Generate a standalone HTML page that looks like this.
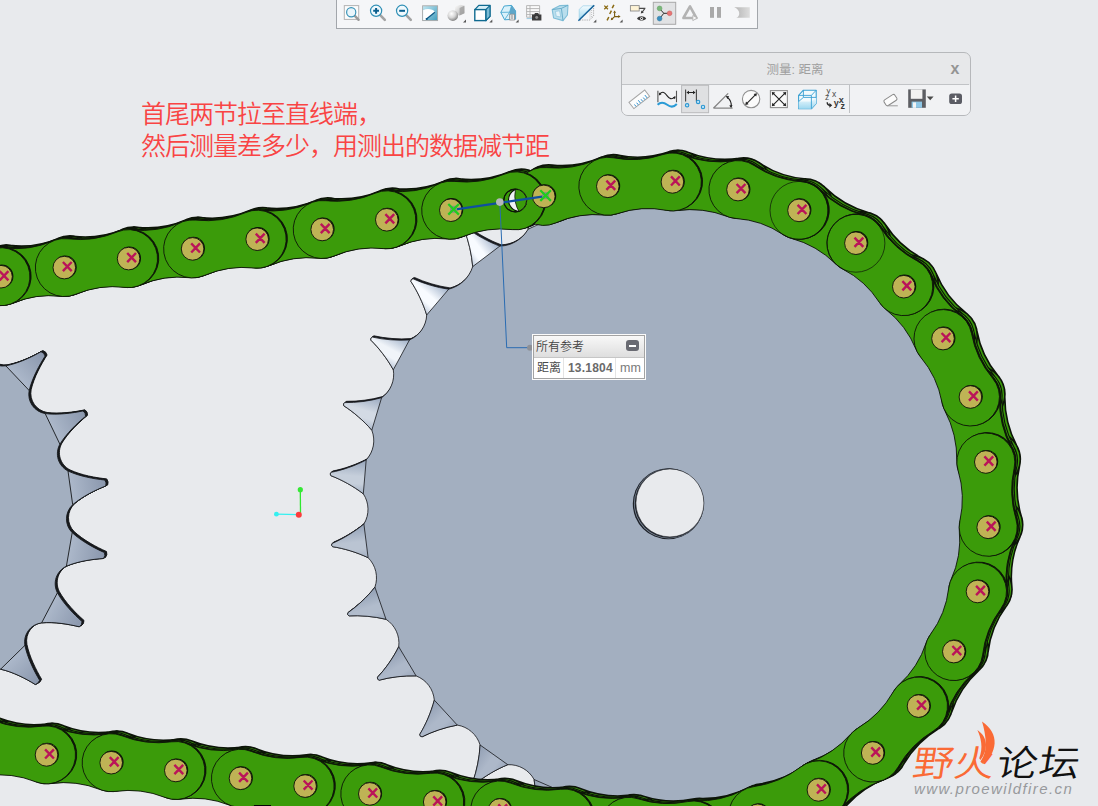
<!DOCTYPE html>
<html><head><meta charset="utf-8"><title>chain</title>
<style>
html,body{margin:0;padding:0}
body{width:1098px;height:806px;position:relative;overflow:hidden;background:#e8eaed;font-family:"Liberation Sans","Noto Sans CJK SC",sans-serif}
.cjk{font-family:"Liberation Sans","Noto Sans CJK SC",sans-serif}
#note{position:absolute;left:141px;top:97.5px;color:#f94444;font-size:25px;line-height:32.5px;white-space:nowrap;font-weight:350;letter-spacing:-1px}
#tb{position:absolute;left:336px;top:-2px;width:420px;height:29px;background:#f5f6f8;border:1px solid #a2a6ab;box-sizing:content-box}
#mp{position:absolute;left:621px;top:52px;width:348px;height:62px;border:1px solid #b6b8bb;border-radius:7px;background:#e7e8ea;box-sizing:content-box;overflow:hidden}
#mp .t{position:absolute;left:-1px;top:0;width:100%;height:31px;line-height:35px;text-align:center;color:#9e9e9e;font-size:12.5px;border-bottom:1px solid #c1c3c6}
#mp .r{position:absolute;left:0;top:32px;width:100%;height:30px;background:#f1f2f4}
#mp .x{position:absolute;left:328.5px;top:6.5px;font:bold 16px "Liberation Sans",sans-serif;color:#949494;line-height:18px}
#pop{position:absolute;left:532px;top:334px;width:112px;height:44px;border:1px solid #fbfbfb;background:#fff;box-sizing:content-box}
#pop .in{position:absolute;left:0;top:0;right:0;bottom:0;border:1px solid #a3a3a3}
#pop .h{position:absolute;left:0;top:0;width:100%;height:22px;background:linear-gradient(#f8f8f8,#dedede);border-bottom:1px solid #c6c6c6;box-sizing:border-box;font-size:12px;line-height:22px;color:#444;padding-left:2px;font-weight:350}
#pop .mb{position:absolute;left:92px;top:4px;width:13px;height:11px;border-radius:3px;background:#696a72}
#pop .mb i{position:absolute;left:3px;top:4.5px;width:7px;height:2px;background:#fff}
#pop .row{position:absolute;left:0;top:22px;width:100%;height:20px;font-size:12px;line-height:20px;color:#555}
#pop .row span{position:absolute;top:0}
#wm{position:absolute;left:0;top:0;font-size:36px;line-height:40px;white-space:nowrap;font-weight:350}
#wm span{position:absolute;top:744px;display:block;transform-origin:0 100%;transform:skewX(-9deg) scaleX(1.13)}
#wm2{position:absolute;left:914px;top:780px;font:italic 15px/18px "Liberation Sans",sans-serif;color:#97999c;letter-spacing:1.4px;white-space:nowrap}

</style></head><body>
<svg width="1098" height="806" viewBox="0 0 1098 806" style="position:absolute;left:0;top:0"><defs><path id="so" d="M-46.2 332.4C-35.2 326.5 -24.4 316.3 -17 308.2Q-13.6 308.2 -11.8 311.1C-14.6 321.7 -17.4 336.3 -16.4 348.7C-15.2 359.8 -5.2 367.5 5.8 365.8C18.1 363.5 31.5 357.2 41 351.7Q44.3 352.7 45.1 356.1C39.2 365.3 32.1 378.3 29.2 390.5C27 401.4 34.2 411.7 45.2 413.6C57.6 415.1 72.2 413.2 83 410.9Q85.8 412.8 85.6 416.3C77.1 423.2 66.4 433.5 59.9 444.2C54.5 453.9 58.1 465.9 68 471C79.4 476.3 93.9 478.9 104.8 480Q106.9 482.8 105.7 486C95.5 490 82.2 496.5 72.7 504.7C64.6 512.3 64.4 524.9 72.2 532.7C81.4 541.2 94.5 548.2 104.5 552.6Q105.7 555.8 103.5 558.5C92.6 559.2 77.9 561.3 66.4 566.2C56.3 571 52.3 582.9 57.4 592.8C63.5 603.7 73.8 614.3 82 621.5Q82.2 625 79.3 626.8C68.6 624.2 54 621.7 41.6 622.9C30.5 624.3 23 634.4 24.9 645.4C27.4 657.6 34 670.9 39.6 680.3Q38.6 683.6 35.3 684.5C26 678.7 12.8 671.9 0.6 669.2C-10.3 667.2 -20.5 674.5 -22.2 685.6C-23.5 698 -21.3 712.6 -18.8 723.3Q-20.7 726.2 -24.2 726C-31.3 717.7 -41.7 707.1 -52.5 700.8A199.9 199.9 0 1 1 -46.2 332.4 Z"/><linearGradient id="s0" gradientUnits="userSpaceOnUse" x1="-31.3" y1="340.6" x2="-14.2" y2="309.3"><stop offset="0" stop-color="#acb8ca"/><stop offset="1" stop-color="#8a97ad"/></linearGradient><linearGradient id="s1" gradientUnits="userSpaceOnUse" x1="17.5" y1="378.1" x2="43.4" y2="353.6"><stop offset="0" stop-color="#acb8ca"/><stop offset="1" stop-color="#8a97ad"/></linearGradient><linearGradient id="s2" gradientUnits="userSpaceOnUse" x1="52.5" y1="428.9" x2="84.6" y2="413.4"><stop offset="0" stop-color="#acb8ca"/><stop offset="1" stop-color="#8a97ad"/></linearGradient><linearGradient id="s3" gradientUnits="userSpaceOnUse" x1="70.4" y1="487.9" x2="105.7" y2="482.9"><stop offset="0" stop-color="#acb8ca"/><stop offset="1" stop-color="#8a97ad"/></linearGradient><linearGradient id="s4" gradientUnits="userSpaceOnUse" x1="69.3" y1="549.5" x2="104.4" y2="555.6"><stop offset="0" stop-color="#acb8ca"/><stop offset="1" stop-color="#8a97ad"/></linearGradient><linearGradient id="s5" gradientUnits="userSpaceOnUse" x1="49.5" y1="607.8" x2="81" y2="624.4"><stop offset="0" stop-color="#acb8ca"/><stop offset="1" stop-color="#8a97ad"/></linearGradient><linearGradient id="s6" gradientUnits="userSpaceOnUse" x1="12.8" y1="657.3" x2="37.7" y2="682.7"><stop offset="0" stop-color="#acb8ca"/><stop offset="1" stop-color="#8a97ad"/></linearGradient><linearGradient id="s7" gradientUnits="userSpaceOnUse" x1="-37.3" y1="693.2" x2="-21.3" y2="725"><stop offset="0" stop-color="#acb8ca"/><stop offset="1" stop-color="#8a97ad"/></linearGradient><path id="bo" d="M623.4 197.3C614.7 188.6 606.4 177.2 601.2 167.4Q599.2 166.1 597.9 168.2C597.3 179.2 594.5 193 590.2 204.5C582.3 213.2 570.5 217.2 558.9 215C548.6 208.4 538 199 530.9 190.6Q528.6 189.8 527.8 192C529.6 202.9 529.8 217 528.1 229.2C522.2 239.4 511.6 245.8 499.8 246.1C488.3 241.9 476 235 467.2 228.3Q464.8 228 464.5 230.4C468.5 240.6 471.8 254.4 472.7 266.6C469.2 277.8 460.2 286.3 448.7 289.2C436.6 287.6 423.1 283.5 413.1 278.8Q410.7 279 410.9 281.4C417 290.5 423.2 303.3 426.7 315C426.2 325.9 419.6 335.6 409.5 339.9C397.3 340.8 383.2 339.6 372.5 337.1Q370.2 337.8 370.8 340.1C378.8 347.8 387.4 359 393.3 369.8C395.1 380.5 390.5 391.4 381.6 397.7C369.8 401.1 355.8 402.8 344.8 402.6Q342.7 403.7 343.8 405.8C353.1 411.7 363.9 420.9 371.8 430.2C375.8 440.4 373.6 451.9 366.2 459.9C355.4 465.7 342 470.3 331.2 472.3Q329.3 473.9 330.9 475.7C341.2 479.5 353.6 486.3 363.3 493.8C369.3 502.9 369.6 514.6 363.9 524C354.5 531.9 342.4 539.1 332.2 543.4Q330.7 545.2 332.6 546.7C343.5 548.3 357.1 552.4 368.1 557.7C375.9 565.4 378.5 576.9 374.9 587.2C367.4 596.8 357 606.4 347.9 612.7Q346.8 614.8 349 615.9C360 615.2 374.1 616.4 386 619.3C395.2 625.3 400.1 635.9 398.7 646.7C393.3 657.8 385.1 669.3 377.5 677.2Q376.9 679.6 379.2 680.2C389.9 677.2 403.9 675.5 416.1 675.9C426.4 679.8 433.4 689.2 434.3 700.1C431.2 712 425.6 725 419.8 734.3Q419.7 736.8 422.1 736.8C431.9 731.8 445.2 727.2 457.3 725.1C468.1 726.8 476.9 734.5 480.1 745C479.5 757.3 476.7 771.1 472.9 781.5Q473.3 783.9 475.7 783.5C484.3 776.5 496.4 769.2 507.8 764.7C518.7 764.2 528.9 769.9 534.1 779.5C536.1 791.6 536.2 805.8 534.7 816.7Q535.5 818.9 537.8 818C544.7 809.5 555.1 799.9 565.3 793.1C575.9 790.3 587 793.8 594.1 802.2C598.6 813.6 601.6 827.4 602.3 838.4Q603.6 840.4 605.6 839.1C610.7 829.3 618.8 817.7 627.4 809C637.2 804.1 648.9 805.2 657.5 811.9C664.2 822.2 670 835.1 673 845.7Q674.7 847.4 676.4 845.7C679.3 835 684.9 822.1 691.5 811.7A309.5 309.5 0 1 0 623.4 197.3 Z"/><linearGradient id="b0" gradientUnits="userSpaceOnUse" x1="623.4" y1="197.3" x2="590.2" y2="204.5"><stop offset="0" stop-color="#9fb0c8"/><stop offset=".5" stop-color="#f8fbff"/><stop offset=".72" stop-color="#f8fbff"/><stop offset="1" stop-color="#becadb"/></linearGradient><linearGradient id="b1" gradientUnits="userSpaceOnUse" x1="558.9" y1="215" x2="528.1" y2="229.2"><stop offset="0" stop-color="#9fb0c8"/><stop offset=".5" stop-color="#f8fbff"/><stop offset=".72" stop-color="#f8fbff"/><stop offset="1" stop-color="#becadb"/></linearGradient><linearGradient id="b2" gradientUnits="userSpaceOnUse" x1="499.8" y1="246.1" x2="472.7" y2="266.6"><stop offset="0" stop-color="#9fb0c8"/><stop offset=".5" stop-color="#f8fbff"/><stop offset=".72" stop-color="#f8fbff"/><stop offset="1" stop-color="#becadb"/></linearGradient><linearGradient id="b3" gradientUnits="userSpaceOnUse" x1="448.7" y1="289.2" x2="426.7" y2="315"><stop offset="0" stop-color="#9fb0c8"/><stop offset=".5" stop-color="#f8fbff"/><stop offset=".72" stop-color="#f8fbff"/><stop offset="1" stop-color="#becadb"/></linearGradient><linearGradient id="b4" gradientUnits="userSpaceOnUse" x1="409.5" y1="339.9" x2="393.3" y2="369.8"><stop offset="0" stop-color="#9daec6"/><stop offset=".5" stop-color="#f0f4f9"/><stop offset=".72" stop-color="#f0f4f9"/><stop offset="1" stop-color="#bac6d8"/></linearGradient><linearGradient id="b5" gradientUnits="userSpaceOnUse" x1="381.6" y1="397.7" x2="371.8" y2="430.2"><stop offset="0" stop-color="#98a7be"/><stop offset=".5" stop-color="#d3dae4"/><stop offset=".72" stop-color="#d3dae4"/><stop offset="1" stop-color="#adb9cb"/></linearGradient><linearGradient id="b6" gradientUnits="userSpaceOnUse" x1="366.2" y1="459.9" x2="363.3" y2="493.8"><stop offset="0" stop-color="#95a4ba"/><stop offset=".5" stop-color="#c6cfdb"/><stop offset=".72" stop-color="#c6cfdb"/><stop offset="1" stop-color="#a6b3c6"/></linearGradient><linearGradient id="b7" gradientUnits="userSpaceOnUse" x1="363.9" y1="524" x2="368.1" y2="557.7"><stop offset="0" stop-color="#93a1b7"/><stop offset=".5" stop-color="#bac4d2"/><stop offset=".72" stop-color="#bac4d2"/><stop offset="1" stop-color="#a1adc0"/></linearGradient><linearGradient id="b8" gradientUnits="userSpaceOnUse" x1="374.9" y1="587.2" x2="386" y2="619.3"><stop offset="0" stop-color="#919fb4"/><stop offset=".5" stop-color="#b1bccc"/><stop offset=".72" stop-color="#b1bccc"/><stop offset="1" stop-color="#9ca9bc"/></linearGradient><linearGradient id="b9" gradientUnits="userSpaceOnUse" x1="398.7" y1="646.7" x2="416.1" y2="675.9"><stop offset="0" stop-color="#919eb3"/><stop offset=".5" stop-color="#adb8c9"/><stop offset=".72" stop-color="#adb8c9"/><stop offset="1" stop-color="#9ba7bb"/></linearGradient><linearGradient id="b10" gradientUnits="userSpaceOnUse" x1="434.3" y1="700.1" x2="457.3" y2="725.1"><stop offset="0" stop-color="#919eb3"/><stop offset=".5" stop-color="#adb8c9"/><stop offset=".72" stop-color="#adb8c9"/><stop offset="1" stop-color="#9ba7bb"/></linearGradient><linearGradient id="b11" gradientUnits="userSpaceOnUse" x1="480.1" y1="745" x2="507.8" y2="764.7"><stop offset="0" stop-color="#919eb3"/><stop offset=".5" stop-color="#adb8c9"/><stop offset=".72" stop-color="#adb8c9"/><stop offset="1" stop-color="#9ba7bb"/></linearGradient><linearGradient id="b12" gradientUnits="userSpaceOnUse" x1="534.1" y1="779.5" x2="565.3" y2="793.1"><stop offset="0" stop-color="#919eb3"/><stop offset=".5" stop-color="#adb8c9"/><stop offset=".72" stop-color="#adb8c9"/><stop offset="1" stop-color="#9ba7bb"/></linearGradient><linearGradient id="b13" gradientUnits="userSpaceOnUse" x1="594.1" y1="802.2" x2="627.4" y2="809"><stop offset="0" stop-color="#919eb3"/><stop offset=".5" stop-color="#adb8c9"/><stop offset=".72" stop-color="#adb8c9"/><stop offset="1" stop-color="#9ba7bb"/></linearGradient><linearGradient id="b14" gradientUnits="userSpaceOnUse" x1="657.5" y1="811.9" x2="691.5" y2="811.7"><stop offset="0" stop-color="#919eb3"/><stop offset=".5" stop-color="#adb8c9"/><stop offset=".72" stop-color="#adb8c9"/><stop offset="1" stop-color="#9ba7bb"/></linearGradient></defs><use href="#so" transform="translate(2,-1.1)" fill="#23272e" stroke="#15171a" stroke-width="0.9"/>
<use href="#so" transform="translate(1.3,-0.7)" fill="#23272e" stroke="#15171a" stroke-width="0.9"/>
<use href="#so" transform="translate(0.7,-0.4)" fill="#23272e" stroke="#15171a" stroke-width="0.9"/>
<use href="#so" fill="#a3afc0" stroke="#15171a" stroke-width="0.9" stroke-linejoin="round"/>
<path d="M-46.2 332.4C-35.2 326.5 -24.4 316.3 -17 308.2Q-13.6 308.2 -11.8 311.1C-14.6 321.7 -17.4 336.3 -16.4 348.7Z" fill="url(#s0)" stroke="#15171a" stroke-width="0.9" stroke-linejoin="round"/>
<path d="M5.8 365.8C18.1 363.5 31.5 357.2 41 351.7Q44.3 352.7 45.1 356.1C39.2 365.3 32.1 378.3 29.2 390.5Z" fill="url(#s1)" stroke="#15171a" stroke-width="0.9" stroke-linejoin="round"/>
<path d="M45.2 413.6C57.6 415.1 72.2 413.2 83 410.9Q85.8 412.8 85.6 416.3C77.1 423.2 66.4 433.5 59.9 444.2Z" fill="url(#s2)" stroke="#15171a" stroke-width="0.9" stroke-linejoin="round"/>
<path d="M68 471C79.4 476.3 93.9 478.9 104.8 480Q106.9 482.8 105.7 486C95.5 490 82.2 496.5 72.7 504.7Z" fill="url(#s3)" stroke="#15171a" stroke-width="0.9" stroke-linejoin="round"/>
<path d="M72.2 532.7C81.4 541.2 94.5 548.2 104.5 552.6Q105.7 555.8 103.5 558.5C92.6 559.2 77.9 561.3 66.4 566.2Z" fill="url(#s4)" stroke="#15171a" stroke-width="0.9" stroke-linejoin="round"/>
<path d="M57.4 592.8C63.5 603.7 73.8 614.3 82 621.5Q82.2 625 79.3 626.8C68.6 624.2 54 621.7 41.6 622.9Z" fill="url(#s5)" stroke="#15171a" stroke-width="0.9" stroke-linejoin="round"/>
<path d="M24.9 645.4C27.4 657.6 34 670.9 39.6 680.3Q38.6 683.6 35.3 684.5C26 678.7 12.8 671.9 0.6 669.2Z" fill="url(#s6)" stroke="#15171a" stroke-width="0.9" stroke-linejoin="round"/>
<path d="M-22.2 685.6C-23.5 698 -21.3 712.6 -18.8 723.3Q-20.7 726.2 -24.2 726C-31.3 717.7 -41.7 707.1 -52.5 700.8Z" fill="url(#s7)" stroke="#15171a" stroke-width="0.9" stroke-linejoin="round"/>
<use href="#bo" transform="translate(1.5,-1.3)" fill="#23272e" stroke="#15171a" stroke-width="0.8"/>
<use href="#bo" transform="translate(0.8,-0.7)" fill="#23272e" stroke="#15171a" stroke-width="0.8"/>
<use href="#bo" fill="#a3afc0" stroke="#15171a" stroke-width="0.8" stroke-linejoin="round"/>
<path d="M623.4 197.3C614.7 188.6 606.4 177.2 601.2 167.4Q599.2 166.1 597.9 168.2C597.3 179.2 594.5 193 590.2 204.5Z" fill="url(#b0)" stroke="#15171a" stroke-width="0.8" stroke-linejoin="round"/>
<path d="M558.9 215C548.6 208.4 538 199 530.9 190.6Q528.6 189.8 527.8 192C529.6 202.9 529.8 217 528.1 229.2Z" fill="url(#b1)" stroke="#15171a" stroke-width="0.8" stroke-linejoin="round"/>
<path d="M499.8 246.1C488.3 241.9 476 235 467.2 228.3Q464.8 228 464.5 230.4C468.5 240.6 471.8 254.4 472.7 266.6Z" fill="url(#b2)" stroke="#15171a" stroke-width="0.8" stroke-linejoin="round"/>
<path d="M448.7 289.2C436.6 287.6 423.1 283.5 413.1 278.8Q410.7 279 410.9 281.4C417 290.5 423.2 303.3 426.7 315Z" fill="url(#b3)" stroke="#15171a" stroke-width="0.8" stroke-linejoin="round"/>
<path d="M409.5 339.9C397.3 340.8 383.2 339.6 372.5 337.1Q370.2 337.8 370.8 340.1C378.8 347.8 387.4 359 393.3 369.8Z" fill="url(#b4)" stroke="#15171a" stroke-width="0.8" stroke-linejoin="round"/>
<path d="M381.6 397.7C369.8 401.1 355.8 402.8 344.8 402.6Q342.7 403.7 343.8 405.8C353.1 411.7 363.9 420.9 371.8 430.2Z" fill="url(#b5)" stroke="#15171a" stroke-width="0.8" stroke-linejoin="round"/>
<path d="M366.2 459.9C355.4 465.7 342 470.3 331.2 472.3Q329.3 473.9 330.9 475.7C341.2 479.5 353.6 486.3 363.3 493.8Z" fill="url(#b6)" stroke="#15171a" stroke-width="0.8" stroke-linejoin="round"/>
<path d="M363.9 524C354.5 531.9 342.4 539.1 332.2 543.4Q330.7 545.2 332.6 546.7C343.5 548.3 357.1 552.4 368.1 557.7Z" fill="url(#b7)" stroke="#15171a" stroke-width="0.8" stroke-linejoin="round"/>
<path d="M374.9 587.2C367.4 596.8 357 606.4 347.9 612.7Q346.8 614.8 349 615.9C360 615.2 374.1 616.4 386 619.3Z" fill="url(#b8)" stroke="#15171a" stroke-width="0.8" stroke-linejoin="round"/>
<path d="M398.7 646.7C393.3 657.8 385.1 669.3 377.5 677.2Q376.9 679.6 379.2 680.2C389.9 677.2 403.9 675.5 416.1 675.9Z" fill="url(#b9)" stroke="#15171a" stroke-width="0.8" stroke-linejoin="round"/>
<path d="M434.3 700.1C431.2 712 425.6 725 419.8 734.3Q419.7 736.8 422.1 736.8C431.9 731.8 445.2 727.2 457.3 725.1Z" fill="url(#b10)" stroke="#15171a" stroke-width="0.8" stroke-linejoin="round"/>
<path d="M480.1 745C479.5 757.3 476.7 771.1 472.9 781.5Q473.3 783.9 475.7 783.5C484.3 776.5 496.4 769.2 507.8 764.7Z" fill="url(#b11)" stroke="#15171a" stroke-width="0.8" stroke-linejoin="round"/>
<path d="M534.1 779.5C536.1 791.6 536.2 805.8 534.7 816.7Q535.5 818.9 537.8 818C544.7 809.5 555.1 799.9 565.3 793.1Z" fill="url(#b12)" stroke="#15171a" stroke-width="0.8" stroke-linejoin="round"/>
<path d="M594.1 802.2C598.6 813.6 601.6 827.4 602.3 838.4Q603.6 840.4 605.6 839.1C610.7 829.3 618.8 817.7 627.4 809Z" fill="url(#b13)" stroke="#15171a" stroke-width="0.8" stroke-linejoin="round"/>
<path d="M657.5 811.9C664.2 822.2 670 835.1 673 845.7Q674.7 847.4 676.4 845.7C679.3 835 684.9 822.1 691.5 811.7Z" fill="url(#b14)" stroke="#15171a" stroke-width="0.8" stroke-linejoin="round"/>
<circle cx="668.3" cy="503.8" r="35.5" fill="#1d2128"/>
<circle cx="668.9" cy="503.5" r="34.9" fill="#7d8999"/>
<circle cx="669.4" cy="503.2" r="34.6" fill="#1d2128"/>
<circle cx="669.9" cy="502.9" r="34" fill="#e8eaed" stroke="#23272e" stroke-width="0.6"/>
<g transform="translate(5.4,-2.5)"><path d="M12.4 303.4Q35.7 293.3 60.9 296.4A29 29 0 1 0 52.9 240.9Q29.6 251 4.4 247.9A29 29 0 1 0 12.4 303.4ZM140.2 285.2Q163.8 274.9 189.4 277.7A29 29 0 1 0 181 222.3Q157.4 232.6 131.8 229.8A29 29 0 1 0 140.2 285.2ZM268.8 265.8Q292.9 255.5 318.9 258.3A29 29 0 1 0 310.6 202.9Q286.5 213.2 260.5 210.4A29 29 0 1 0 268.8 265.8ZM398.4 246.4Q422 236.2 447.5 239A29 29 0 1 0 439.2 183.6Q415.6 193.8 390.1 191A29 29 0 1 0 398.4 246.4ZM555.6 222.9Q579.1 212.5 604.8 215.1A29 29 0 1 0 596 159.8Q572.5 170.2 546.8 167.6A29 29 0 1 0 555.6 222.9ZM676.6 210.6Q702.7 207 727.3 216.5A29 29 0 1 0 733.8 160.9Q707.7 164.5 683.1 155A29 29 0 1 0 676.6 210.6ZM791.5 238.4Q816.8 245.3 835.4 263.7A29 29 0 1 0 863.4 215.2Q838.1 208.3 819.5 189.9A29 29 0 1 0 791.5 238.4ZM886 309.6Q906.3 325.5 916.1 349.5A29 29 0 1 0 960.8 315.7Q940.5 299.8 930.7 275.8A29 29 0 1 0 886 309.6ZM944.9 410.8Q957.3 434.4 956.8 461.2A29 29 0 1 0 1011.3 448.2Q998.9 424.6 999.4 397.8A29 29 0 1 0 944.9 410.8ZM959.3 530.1Q961.8 555.9 951.1 579.5A29 29 0 1 0 1006.4 588.7Q1003.9 562.9 1014.6 539.3A29 29 0 1 0 959.3 530.1ZM926.2 642.7Q918.2 667.2 899.1 684.6A29 29 0 1 0 946.1 715Q954.1 690.5 973.2 673.1A29 29 0 1 0 926.2 642.7ZM850.7 734.1Q833.5 753.8 808.9 762.5A29 29 0 1 0 840.4 808.8Q857.6 789.1 882.2 780.4A29 29 0 1 0 850.7 734.1ZM744.1 789.7Q720.8 801.8 694.6 801A29 29 0 1 0 707.1 855.6Q730.4 843.5 756.6 844.3A29 29 0 1 0 744.1 789.7ZM-78.7 768Q-53 764.4 -29 774A29 29 0 1 0 -22.2 718.4Q-47.9 722 -72 712.4A29 29 0 1 0 -78.7 768ZM50.6 783.6Q76.3 780 100.3 789.6A29 29 0 1 0 107.1 734Q81.4 737.6 57.3 728A29 29 0 1 0 50.6 783.6ZM179.9 799.2Q205.6 795.6 229.6 805.2A29 29 0 1 0 236.4 749.6Q210.7 753.2 186.6 743.6A29 29 0 1 0 179.9 799.2ZM309.2 814.8Q334.9 811.2 358.9 820.8A29 29 0 1 0 365.7 765.2Q340 768.8 315.9 759.2A29 29 0 1 0 309.2 814.8ZM438.7 830.7Q464.6 827.2 488.8 836.9A29 29 0 1 0 495.7 781.3Q469.8 784.8 445.6 775.1A29 29 0 1 0 438.7 830.7ZM568.4 846.7Q594 843.4 618 853.1A29 29 0 1 0 625.1 797.6Q599.5 800.9 575.5 791.2A29 29 0 1 0 568.4 846.7ZM-52.1 312.7Q-28.2 302.5 -2.4 305.5A29 29 0 1 0 -10.4 250Q-34.3 260.2 -60.1 257.2A29 29 0 1 0 -52.1 312.7ZM75.6 294.3Q99.4 284.3 125 287.4A29 29 0 1 0 117.3 231.9Q93.5 241.9 67.9 238.8A29 29 0 1 0 75.6 294.3ZM204.2 275.5Q228.1 265.2 253.9 268A29 29 0 1 0 245.6 212.6Q221.7 222.9 195.9 220.1A29 29 0 1 0 204.2 275.5ZM333.8 256.1Q357.7 245.8 383.5 248.6A29 29 0 1 0 375.2 193.2Q351.3 203.5 325.5 200.7A29 29 0 1 0 333.8 256.1ZM462.2 236.8Q486.3 226.7 512.2 229.6A29 29 0 1 0 504.2 174.2Q480.1 184.3 454.2 181.4A29 29 0 1 0 462.2 236.8ZM617.2 213.7Q641.6 205.4 666.8 210.4A29 29 0 1 0 663 154.5Q638.6 162.8 613.4 157.8A29 29 0 1 0 617.2 213.7ZM736.1 218.5Q761.6 220.2 782.9 234.5A29 29 0 1 0 800.9 181.5Q775.4 179.8 754.1 165.5A29 29 0 1 0 736.1 218.5ZM842.6 269Q865.5 280.8 879.4 302.4A29 29 0 1 0 917.1 260.9Q894.2 249.1 880.3 227.5A29 29 0 1 0 842.6 269ZM920.8 357.3Q937.3 376.9 941.9 402.1A29 29 0 1 0 992.6 378.3Q976.1 358.7 971.5 333.5A29 29 0 1 0 920.8 357.3ZM958.1 470.5Q965.6 495.4 959.9 520.8A29 29 0 1 0 1015.9 518.8Q1008.4 493.9 1014.1 468.5A29 29 0 1 0 958.1 470.5ZM948.7 588.2Q945.8 613.7 930.5 634.3A29 29 0 1 0 982.6 654.9Q985.5 629.4 1000.8 608.8A29 29 0 1 0 948.7 588.2ZM893.2 691.9Q880.3 714.6 857.9 728.1A29 29 0 1 0 898 767.2Q910.9 744.5 933.3 731A29 29 0 1 0 893.2 691.9ZM800.7 767Q779.8 782.9 753.8 786.6A29 29 0 1 0 775.4 838.2Q796.3 822.3 822.3 818.6A29 29 0 1 0 800.7 767ZM-14.1 775.8Q11.6 772.2 35.7 781.8A29 29 0 1 0 42.4 726.2Q16.7 729.8 -7.3 720.2A29 29 0 1 0 -14.1 775.8ZM115.2 791.4Q140.9 787.8 165 797.4A29 29 0 1 0 171.7 741.8Q146 745.4 122 735.8A29 29 0 1 0 115.2 791.4ZM244.5 807Q270.2 803.4 294.3 813A29 29 0 1 0 301 757.4Q275.3 761 251.3 751.4A29 29 0 1 0 244.5 807ZM373.7 822.6Q399.6 819.2 423.8 828.9A29 29 0 1 0 430.7 773.3Q404.9 776.7 380.7 767A29 29 0 1 0 373.7 822.6ZM503.7 838.7Q529.5 835.2 553.6 844.9A29 29 0 1 0 560.5 789.3Q534.7 792.8 510.6 783.1A29 29 0 1 0 503.7 838.7ZM634.9 854.7Q660 849.5 684.4 857.5A29 29 0 1 0 687.6 801.6Q662.5 806.8 638.1 798.8A29 29 0 1 0 634.9 854.7Z" fill="#3b9b0a" stroke="#0c1408" stroke-width="1.6"/></g>
<g transform="translate(2.6,-1.3)"><path d="M12.4 303.4Q35.7 293.3 60.9 296.4A29 29 0 1 0 52.9 240.9Q29.6 251 4.4 247.9A29 29 0 1 0 12.4 303.4ZM140.2 285.2Q163.8 274.9 189.4 277.7A29 29 0 1 0 181 222.3Q157.4 232.6 131.8 229.8A29 29 0 1 0 140.2 285.2ZM268.8 265.8Q292.9 255.5 318.9 258.3A29 29 0 1 0 310.6 202.9Q286.5 213.2 260.5 210.4A29 29 0 1 0 268.8 265.8ZM398.4 246.4Q422 236.2 447.5 239A29 29 0 1 0 439.2 183.6Q415.6 193.8 390.1 191A29 29 0 1 0 398.4 246.4ZM555.6 222.9Q579.1 212.5 604.8 215.1A29 29 0 1 0 596 159.8Q572.5 170.2 546.8 167.6A29 29 0 1 0 555.6 222.9ZM676.6 210.6Q702.7 207 727.3 216.5A29 29 0 1 0 733.8 160.9Q707.7 164.5 683.1 155A29 29 0 1 0 676.6 210.6ZM791.5 238.4Q816.8 245.3 835.4 263.7A29 29 0 1 0 863.4 215.2Q838.1 208.3 819.5 189.9A29 29 0 1 0 791.5 238.4ZM886 309.6Q906.3 325.5 916.1 349.5A29 29 0 1 0 960.8 315.7Q940.5 299.8 930.7 275.8A29 29 0 1 0 886 309.6ZM944.9 410.8Q957.3 434.4 956.8 461.2A29 29 0 1 0 1011.3 448.2Q998.9 424.6 999.4 397.8A29 29 0 1 0 944.9 410.8ZM959.3 530.1Q961.8 555.9 951.1 579.5A29 29 0 1 0 1006.4 588.7Q1003.9 562.9 1014.6 539.3A29 29 0 1 0 959.3 530.1ZM926.2 642.7Q918.2 667.2 899.1 684.6A29 29 0 1 0 946.1 715Q954.1 690.5 973.2 673.1A29 29 0 1 0 926.2 642.7ZM850.7 734.1Q833.5 753.8 808.9 762.5A29 29 0 1 0 840.4 808.8Q857.6 789.1 882.2 780.4A29 29 0 1 0 850.7 734.1ZM744.1 789.7Q720.8 801.8 694.6 801A29 29 0 1 0 707.1 855.6Q730.4 843.5 756.6 844.3A29 29 0 1 0 744.1 789.7ZM-78.7 768Q-53 764.4 -29 774A29 29 0 1 0 -22.2 718.4Q-47.9 722 -72 712.4A29 29 0 1 0 -78.7 768ZM50.6 783.6Q76.3 780 100.3 789.6A29 29 0 1 0 107.1 734Q81.4 737.6 57.3 728A29 29 0 1 0 50.6 783.6ZM179.9 799.2Q205.6 795.6 229.6 805.2A29 29 0 1 0 236.4 749.6Q210.7 753.2 186.6 743.6A29 29 0 1 0 179.9 799.2ZM309.2 814.8Q334.9 811.2 358.9 820.8A29 29 0 1 0 365.7 765.2Q340 768.8 315.9 759.2A29 29 0 1 0 309.2 814.8ZM438.7 830.7Q464.6 827.2 488.8 836.9A29 29 0 1 0 495.7 781.3Q469.8 784.8 445.6 775.1A29 29 0 1 0 438.7 830.7ZM568.4 846.7Q594 843.4 618 853.1A29 29 0 1 0 625.1 797.6Q599.5 800.9 575.5 791.2A29 29 0 1 0 568.4 846.7ZM-52.1 312.7Q-28.2 302.5 -2.4 305.5A29 29 0 1 0 -10.4 250Q-34.3 260.2 -60.1 257.2A29 29 0 1 0 -52.1 312.7ZM75.6 294.3Q99.4 284.3 125 287.4A29 29 0 1 0 117.3 231.9Q93.5 241.9 67.9 238.8A29 29 0 1 0 75.6 294.3ZM204.2 275.5Q228.1 265.2 253.9 268A29 29 0 1 0 245.6 212.6Q221.7 222.9 195.9 220.1A29 29 0 1 0 204.2 275.5ZM333.8 256.1Q357.7 245.8 383.5 248.6A29 29 0 1 0 375.2 193.2Q351.3 203.5 325.5 200.7A29 29 0 1 0 333.8 256.1ZM462.2 236.8Q486.3 226.7 512.2 229.6A29 29 0 1 0 504.2 174.2Q480.1 184.3 454.2 181.4A29 29 0 1 0 462.2 236.8ZM617.2 213.7Q641.6 205.4 666.8 210.4A29 29 0 1 0 663 154.5Q638.6 162.8 613.4 157.8A29 29 0 1 0 617.2 213.7ZM736.1 218.5Q761.6 220.2 782.9 234.5A29 29 0 1 0 800.9 181.5Q775.4 179.8 754.1 165.5A29 29 0 1 0 736.1 218.5ZM842.6 269Q865.5 280.8 879.4 302.4A29 29 0 1 0 917.1 260.9Q894.2 249.1 880.3 227.5A29 29 0 1 0 842.6 269ZM920.8 357.3Q937.3 376.9 941.9 402.1A29 29 0 1 0 992.6 378.3Q976.1 358.7 971.5 333.5A29 29 0 1 0 920.8 357.3ZM958.1 470.5Q965.6 495.4 959.9 520.8A29 29 0 1 0 1015.9 518.8Q1008.4 493.9 1014.1 468.5A29 29 0 1 0 958.1 470.5ZM948.7 588.2Q945.8 613.7 930.5 634.3A29 29 0 1 0 982.6 654.9Q985.5 629.4 1000.8 608.8A29 29 0 1 0 948.7 588.2ZM893.2 691.9Q880.3 714.6 857.9 728.1A29 29 0 1 0 898 767.2Q910.9 744.5 933.3 731A29 29 0 1 0 893.2 691.9ZM800.7 767Q779.8 782.9 753.8 786.6A29 29 0 1 0 775.4 838.2Q796.3 822.3 822.3 818.6A29 29 0 1 0 800.7 767ZM-14.1 775.8Q11.6 772.2 35.7 781.8A29 29 0 1 0 42.4 726.2Q16.7 729.8 -7.3 720.2A29 29 0 1 0 -14.1 775.8ZM115.2 791.4Q140.9 787.8 165 797.4A29 29 0 1 0 171.7 741.8Q146 745.4 122 735.8A29 29 0 1 0 115.2 791.4ZM244.5 807Q270.2 803.4 294.3 813A29 29 0 1 0 301 757.4Q275.3 761 251.3 751.4A29 29 0 1 0 244.5 807ZM373.7 822.6Q399.6 819.2 423.8 828.9A29 29 0 1 0 430.7 773.3Q404.9 776.7 380.7 767A29 29 0 1 0 373.7 822.6ZM503.7 838.7Q529.5 835.2 553.6 844.9A29 29 0 1 0 560.5 789.3Q534.7 792.8 510.6 783.1A29 29 0 1 0 503.7 838.7ZM634.9 854.7Q660 849.5 684.4 857.5A29 29 0 1 0 687.6 801.6Q662.5 806.8 638.1 798.8A29 29 0 1 0 634.9 854.7Z" fill="#3b9b0a" stroke="#0c1408" stroke-width="1.1"/></g>
<path d="M12.4 303.4Q35.7 293.3 60.9 296.4A29 29 0 1 0 52.9 240.9Q29.6 251 4.4 247.9A29 29 0 1 0 12.4 303.4ZM140.2 285.2Q163.8 274.9 189.4 277.7A29 29 0 1 0 181 222.3Q157.4 232.6 131.8 229.8A29 29 0 1 0 140.2 285.2ZM268.8 265.8Q292.9 255.5 318.9 258.3A29 29 0 1 0 310.6 202.9Q286.5 213.2 260.5 210.4A29 29 0 1 0 268.8 265.8ZM398.4 246.4Q422 236.2 447.5 239A29 29 0 1 0 439.2 183.6Q415.6 193.8 390.1 191A29 29 0 1 0 398.4 246.4ZM555.6 222.9Q579.1 212.5 604.8 215.1A29 29 0 1 0 596 159.8Q572.5 170.2 546.8 167.6A29 29 0 1 0 555.6 222.9ZM676.6 210.6Q702.7 207 727.3 216.5A29 29 0 1 0 733.8 160.9Q707.7 164.5 683.1 155A29 29 0 1 0 676.6 210.6ZM791.5 238.4Q816.8 245.3 835.4 263.7A29 29 0 1 0 863.4 215.2Q838.1 208.3 819.5 189.9A29 29 0 1 0 791.5 238.4ZM886 309.6Q906.3 325.5 916.1 349.5A29 29 0 1 0 960.8 315.7Q940.5 299.8 930.7 275.8A29 29 0 1 0 886 309.6ZM944.9 410.8Q957.3 434.4 956.8 461.2A29 29 0 1 0 1011.3 448.2Q998.9 424.6 999.4 397.8A29 29 0 1 0 944.9 410.8ZM959.3 530.1Q961.8 555.9 951.1 579.5A29 29 0 1 0 1006.4 588.7Q1003.9 562.9 1014.6 539.3A29 29 0 1 0 959.3 530.1ZM926.2 642.7Q918.2 667.2 899.1 684.6A29 29 0 1 0 946.1 715Q954.1 690.5 973.2 673.1A29 29 0 1 0 926.2 642.7ZM850.7 734.1Q833.5 753.8 808.9 762.5A29 29 0 1 0 840.4 808.8Q857.6 789.1 882.2 780.4A29 29 0 1 0 850.7 734.1ZM744.1 789.7Q720.8 801.8 694.6 801A29 29 0 1 0 707.1 855.6Q730.4 843.5 756.6 844.3A29 29 0 1 0 744.1 789.7ZM-78.7 768Q-53 764.4 -29 774A29 29 0 1 0 -22.2 718.4Q-47.9 722 -72 712.4A29 29 0 1 0 -78.7 768ZM50.6 783.6Q76.3 780 100.3 789.6A29 29 0 1 0 107.1 734Q81.4 737.6 57.3 728A29 29 0 1 0 50.6 783.6ZM179.9 799.2Q205.6 795.6 229.6 805.2A29 29 0 1 0 236.4 749.6Q210.7 753.2 186.6 743.6A29 29 0 1 0 179.9 799.2ZM309.2 814.8Q334.9 811.2 358.9 820.8A29 29 0 1 0 365.7 765.2Q340 768.8 315.9 759.2A29 29 0 1 0 309.2 814.8ZM438.7 830.7Q464.6 827.2 488.8 836.9A29 29 0 1 0 495.7 781.3Q469.8 784.8 445.6 775.1A29 29 0 1 0 438.7 830.7ZM568.4 846.7Q594 843.4 618 853.1A29 29 0 1 0 625.1 797.6Q599.5 800.9 575.5 791.2A29 29 0 1 0 568.4 846.7Z" transform="translate(1.1,-0.4)" fill="#0c1408" stroke="#0c1408" stroke-width="0.9"/>
<path d="M12.4 303.4Q35.7 293.3 60.9 296.4A29 29 0 1 0 52.9 240.9Q29.6 251 4.4 247.9A29 29 0 1 0 12.4 303.4Z" fill="#3b9b0a" stroke="#0c1408" stroke-width="0.9"/>
<path d="M140.2 285.2Q163.8 274.9 189.4 277.7A29 29 0 1 0 181 222.3Q157.4 232.6 131.8 229.8A29 29 0 1 0 140.2 285.2Z" fill="#3b9b0a" stroke="#0c1408" stroke-width="0.9"/>
<path d="M268.8 265.8Q292.9 255.5 318.9 258.3A29 29 0 1 0 310.6 202.9Q286.5 213.2 260.5 210.4A29 29 0 1 0 268.8 265.8Z" fill="#3b9b0a" stroke="#0c1408" stroke-width="0.9"/>
<path d="M398.4 246.4Q422 236.2 447.5 239A29 29 0 1 0 439.2 183.6Q415.6 193.8 390.1 191A29 29 0 1 0 398.4 246.4Z" fill="#3b9b0a" stroke="#0c1408" stroke-width="0.9"/>
<path d="M555.6 222.9Q579.1 212.5 604.8 215.1A29 29 0 1 0 596 159.8Q572.5 170.2 546.8 167.6A29 29 0 1 0 555.6 222.9Z" fill="#3b9b0a" stroke="#0c1408" stroke-width="0.9"/>
<path d="M676.6 210.6Q702.7 207 727.3 216.5A29 29 0 1 0 733.8 160.9Q707.7 164.5 683.1 155A29 29 0 1 0 676.6 210.6Z" fill="#3b9b0a" stroke="#0c1408" stroke-width="0.9"/>
<path d="M791.5 238.4Q816.8 245.3 835.4 263.7A29 29 0 1 0 863.4 215.2Q838.1 208.3 819.5 189.9A29 29 0 1 0 791.5 238.4Z" fill="#3b9b0a" stroke="#0c1408" stroke-width="0.9"/>
<path d="M886 309.6Q906.3 325.5 916.1 349.5A29 29 0 1 0 960.8 315.7Q940.5 299.8 930.7 275.8A29 29 0 1 0 886 309.6Z" fill="#3b9b0a" stroke="#0c1408" stroke-width="0.9"/>
<path d="M944.9 410.8Q957.3 434.4 956.8 461.2A29 29 0 1 0 1011.3 448.2Q998.9 424.6 999.4 397.8A29 29 0 1 0 944.9 410.8Z" fill="#3b9b0a" stroke="#0c1408" stroke-width="0.9"/>
<path d="M959.3 530.1Q961.8 555.9 951.1 579.5A29 29 0 1 0 1006.4 588.7Q1003.9 562.9 1014.6 539.3A29 29 0 1 0 959.3 530.1Z" fill="#3b9b0a" stroke="#0c1408" stroke-width="0.9"/>
<path d="M926.2 642.7Q918.2 667.2 899.1 684.6A29 29 0 1 0 946.1 715Q954.1 690.5 973.2 673.1A29 29 0 1 0 926.2 642.7Z" fill="#3b9b0a" stroke="#0c1408" stroke-width="0.9"/>
<path d="M850.7 734.1Q833.5 753.8 808.9 762.5A29 29 0 1 0 840.4 808.8Q857.6 789.1 882.2 780.4A29 29 0 1 0 850.7 734.1Z" fill="#3b9b0a" stroke="#0c1408" stroke-width="0.9"/>
<path d="M744.1 789.7Q720.8 801.8 694.6 801A29 29 0 1 0 707.1 855.6Q730.4 843.5 756.6 844.3A29 29 0 1 0 744.1 789.7Z" fill="#3b9b0a" stroke="#0c1408" stroke-width="0.9"/>
<path d="M-78.7 768Q-53 764.4 -29 774A29 29 0 1 0 -22.2 718.4Q-47.9 722 -72 712.4A29 29 0 1 0 -78.7 768Z" fill="#3b9b0a" stroke="#0c1408" stroke-width="0.9"/>
<path d="M50.6 783.6Q76.3 780 100.3 789.6A29 29 0 1 0 107.1 734Q81.4 737.6 57.3 728A29 29 0 1 0 50.6 783.6Z" fill="#3b9b0a" stroke="#0c1408" stroke-width="0.9"/>
<path d="M179.9 799.2Q205.6 795.6 229.6 805.2A29 29 0 1 0 236.4 749.6Q210.7 753.2 186.6 743.6A29 29 0 1 0 179.9 799.2Z" fill="#3b9b0a" stroke="#0c1408" stroke-width="0.9"/>
<path d="M309.2 814.8Q334.9 811.2 358.9 820.8A29 29 0 1 0 365.7 765.2Q340 768.8 315.9 759.2A29 29 0 1 0 309.2 814.8Z" fill="#3b9b0a" stroke="#0c1408" stroke-width="0.9"/>
<path d="M438.7 830.7Q464.6 827.2 488.8 836.9A29 29 0 1 0 495.7 781.3Q469.8 784.8 445.6 775.1A29 29 0 1 0 438.7 830.7Z" fill="#3b9b0a" stroke="#0c1408" stroke-width="0.9"/>
<path d="M568.4 846.7Q594 843.4 618 853.1A29 29 0 1 0 625.1 797.6Q599.5 800.9 575.5 791.2A29 29 0 1 0 568.4 846.7Z" fill="#3b9b0a" stroke="#0c1408" stroke-width="0.9"/>
<path d="M-52.1 312.7Q-28.2 302.5 -2.4 305.5A29 29 0 1 0 -10.4 250Q-34.3 260.2 -60.1 257.2A29 29 0 1 0 -52.1 312.7ZM75.6 294.3Q99.4 284.3 125 287.4A29 29 0 1 0 117.3 231.9Q93.5 241.9 67.9 238.8A29 29 0 1 0 75.6 294.3ZM204.2 275.5Q228.1 265.2 253.9 268A29 29 0 1 0 245.6 212.6Q221.7 222.9 195.9 220.1A29 29 0 1 0 204.2 275.5ZM333.8 256.1Q357.7 245.8 383.5 248.6A29 29 0 1 0 375.2 193.2Q351.3 203.5 325.5 200.7A29 29 0 1 0 333.8 256.1ZM462.2 236.8Q486.3 226.7 512.2 229.6A29 29 0 1 0 504.2 174.2Q480.1 184.3 454.2 181.4A29 29 0 1 0 462.2 236.8ZM617.2 213.7Q641.6 205.4 666.8 210.4A29 29 0 1 0 663 154.5Q638.6 162.8 613.4 157.8A29 29 0 1 0 617.2 213.7ZM736.1 218.5Q761.6 220.2 782.9 234.5A29 29 0 1 0 800.9 181.5Q775.4 179.8 754.1 165.5A29 29 0 1 0 736.1 218.5ZM842.6 269Q865.5 280.8 879.4 302.4A29 29 0 1 0 917.1 260.9Q894.2 249.1 880.3 227.5A29 29 0 1 0 842.6 269ZM920.8 357.3Q937.3 376.9 941.9 402.1A29 29 0 1 0 992.6 378.3Q976.1 358.7 971.5 333.5A29 29 0 1 0 920.8 357.3ZM958.1 470.5Q965.6 495.4 959.9 520.8A29 29 0 1 0 1015.9 518.8Q1008.4 493.9 1014.1 468.5A29 29 0 1 0 958.1 470.5ZM948.7 588.2Q945.8 613.7 930.5 634.3A29 29 0 1 0 982.6 654.9Q985.5 629.4 1000.8 608.8A29 29 0 1 0 948.7 588.2ZM893.2 691.9Q880.3 714.6 857.9 728.1A29 29 0 1 0 898 767.2Q910.9 744.5 933.3 731A29 29 0 1 0 893.2 691.9ZM800.7 767Q779.8 782.9 753.8 786.6A29 29 0 1 0 775.4 838.2Q796.3 822.3 822.3 818.6A29 29 0 1 0 800.7 767ZM-14.1 775.8Q11.6 772.2 35.7 781.8A29 29 0 1 0 42.4 726.2Q16.7 729.8 -7.3 720.2A29 29 0 1 0 -14.1 775.8ZM115.2 791.4Q140.9 787.8 165 797.4A29 29 0 1 0 171.7 741.8Q146 745.4 122 735.8A29 29 0 1 0 115.2 791.4ZM244.5 807Q270.2 803.4 294.3 813A29 29 0 1 0 301 757.4Q275.3 761 251.3 751.4A29 29 0 1 0 244.5 807ZM373.7 822.6Q399.6 819.2 423.8 828.9A29 29 0 1 0 430.7 773.3Q404.9 776.7 380.7 767A29 29 0 1 0 373.7 822.6ZM503.7 838.7Q529.5 835.2 553.6 844.9A29 29 0 1 0 560.5 789.3Q534.7 792.8 510.6 783.1A29 29 0 1 0 503.7 838.7ZM634.9 854.7Q660 849.5 684.4 857.5A29 29 0 1 0 687.6 801.6Q662.5 806.8 638.1 798.8A29 29 0 1 0 634.9 854.7Z" transform="translate(1.2,-0.45)" fill="#0c1408" stroke="#0c1408" stroke-width="0.9"/>
<path d="M-52.1 312.7Q-28.2 302.5 -2.4 305.5A29 29 0 1 0 -10.4 250Q-34.3 260.2 -60.1 257.2A29 29 0 1 0 -52.1 312.7Z" fill="#3b9b0a" stroke="#0c1408" stroke-width="0.9"/>
<path d="M75.6 294.3Q99.4 284.3 125 287.4A29 29 0 1 0 117.3 231.9Q93.5 241.9 67.9 238.8A29 29 0 1 0 75.6 294.3Z" fill="#3b9b0a" stroke="#0c1408" stroke-width="0.9"/>
<path d="M204.2 275.5Q228.1 265.2 253.9 268A29 29 0 1 0 245.6 212.6Q221.7 222.9 195.9 220.1A29 29 0 1 0 204.2 275.5Z" fill="#3b9b0a" stroke="#0c1408" stroke-width="0.9"/>
<path d="M333.8 256.1Q357.7 245.8 383.5 248.6A29 29 0 1 0 375.2 193.2Q351.3 203.5 325.5 200.7A29 29 0 1 0 333.8 256.1Z" fill="#3b9b0a" stroke="#0c1408" stroke-width="0.9"/>
<path d="M462.2 236.8Q486.3 226.7 512.2 229.6A29 29 0 1 0 504.2 174.2Q480.1 184.3 454.2 181.4A29 29 0 1 0 462.2 236.8Z" fill="#3b9b0a" stroke="#0c1408" stroke-width="0.9"/>
<path d="M617.2 213.7Q641.6 205.4 666.8 210.4A29 29 0 1 0 663 154.5Q638.6 162.8 613.4 157.8A29 29 0 1 0 617.2 213.7Z" fill="#3b9b0a" stroke="#0c1408" stroke-width="0.9"/>
<path d="M736.1 218.5Q761.6 220.2 782.9 234.5A29 29 0 1 0 800.9 181.5Q775.4 179.8 754.1 165.5A29 29 0 1 0 736.1 218.5Z" fill="#3b9b0a" stroke="#0c1408" stroke-width="0.9"/>
<path d="M842.6 269Q865.5 280.8 879.4 302.4A29 29 0 1 0 917.1 260.9Q894.2 249.1 880.3 227.5A29 29 0 1 0 842.6 269Z" fill="#3b9b0a" stroke="#0c1408" stroke-width="0.9"/>
<path d="M920.8 357.3Q937.3 376.9 941.9 402.1A29 29 0 1 0 992.6 378.3Q976.1 358.7 971.5 333.5A29 29 0 1 0 920.8 357.3Z" fill="#3b9b0a" stroke="#0c1408" stroke-width="0.9"/>
<path d="M958.1 470.5Q965.6 495.4 959.9 520.8A29 29 0 1 0 1015.9 518.8Q1008.4 493.9 1014.1 468.5A29 29 0 1 0 958.1 470.5Z" fill="#3b9b0a" stroke="#0c1408" stroke-width="0.9"/>
<path d="M948.7 588.2Q945.8 613.7 930.5 634.3A29 29 0 1 0 982.6 654.9Q985.5 629.4 1000.8 608.8A29 29 0 1 0 948.7 588.2Z" fill="#3b9b0a" stroke="#0c1408" stroke-width="0.9"/>
<path d="M893.2 691.9Q880.3 714.6 857.9 728.1A29 29 0 1 0 898 767.2Q910.9 744.5 933.3 731A29 29 0 1 0 893.2 691.9Z" fill="#3b9b0a" stroke="#0c1408" stroke-width="0.9"/>
<path d="M800.7 767Q779.8 782.9 753.8 786.6A29 29 0 1 0 775.4 838.2Q796.3 822.3 822.3 818.6A29 29 0 1 0 800.7 767Z" fill="#3b9b0a" stroke="#0c1408" stroke-width="0.9"/>
<path d="M-14.1 775.8Q11.6 772.2 35.7 781.8A29 29 0 1 0 42.4 726.2Q16.7 729.8 -7.3 720.2A29 29 0 1 0 -14.1 775.8Z" fill="#3b9b0a" stroke="#0c1408" stroke-width="0.9"/>
<path d="M115.2 791.4Q140.9 787.8 165 797.4A29 29 0 1 0 171.7 741.8Q146 745.4 122 735.8A29 29 0 1 0 115.2 791.4Z" fill="#3b9b0a" stroke="#0c1408" stroke-width="0.9"/>
<path d="M244.5 807Q270.2 803.4 294.3 813A29 29 0 1 0 301 757.4Q275.3 761 251.3 751.4A29 29 0 1 0 244.5 807Z" fill="#3b9b0a" stroke="#0c1408" stroke-width="0.9"/>
<path d="M373.7 822.6Q399.6 819.2 423.8 828.9A29 29 0 1 0 430.7 773.3Q404.9 776.7 380.7 767A29 29 0 1 0 373.7 822.6Z" fill="#3b9b0a" stroke="#0c1408" stroke-width="0.9"/>
<path d="M503.7 838.7Q529.5 835.2 553.6 844.9A29 29 0 1 0 560.5 789.3Q534.7 792.8 510.6 783.1A29 29 0 1 0 503.7 838.7Z" fill="#3b9b0a" stroke="#0c1408" stroke-width="0.9"/>
<path d="M634.9 854.7Q660 849.5 684.4 857.5A29 29 0 1 0 687.6 801.6Q662.5 806.8 638.1 798.8A29 29 0 1 0 634.9 854.7Z" fill="#3b9b0a" stroke="#0c1408" stroke-width="0.9"/>
<circle cx="799" cy="210.4" r="29" fill="none" stroke="#0c1408" stroke-width="0.7"/>
<circle cx="855.9" cy="243.2" r="29" fill="none" stroke="#0c1408" stroke-width="0.7"/>
<clipPath id="hc"><circle cx="515.2" cy="200.5" r="11.4"/></clipPath>
<circle cx="515.2" cy="200.5" r="11.4" fill="#3b9b0a" stroke="#0c1408" stroke-width="1.1"/>
<g clip-path="url(#hc)"><circle cx="519.9" cy="200" r="11.4" fill="#f1f2f4" stroke="#0c1408" stroke-width="1.2"/><circle cx="543.8" cy="196.4" r="29" fill="#3b9b0a" stroke="#0c1408" stroke-width="0.8"/></g>
<circle cx="515.2" cy="200.5" r="11.4" fill="none" stroke="#0c1408" stroke-width="1"/>
<circle cx="1.7" cy="276.3" r="11.7" fill="#0c1408"/><circle cx="1" cy="276.7" r="11.3" fill="#bfb355" stroke="#0c1408" stroke-width="0.9"/>
<circle cx="65" cy="267.2" r="11.7" fill="#0c1408"/><circle cx="64.3" cy="267.6" r="11.3" fill="#bfb355" stroke="#0c1408" stroke-width="0.9"/>
<circle cx="129.3" cy="258.2" r="11.7" fill="#0c1408"/><circle cx="128.6" cy="258.6" r="11.3" fill="#bfb355" stroke="#0c1408" stroke-width="0.9"/>
<circle cx="193.3" cy="248.5" r="11.7" fill="#0c1408"/><circle cx="192.6" cy="248.9" r="11.3" fill="#bfb355" stroke="#0c1408" stroke-width="0.9"/>
<circle cx="257.9" cy="238.8" r="11.7" fill="#0c1408"/><circle cx="257.2" cy="239.2" r="11.3" fill="#bfb355" stroke="#0c1408" stroke-width="0.9"/>
<circle cx="322.9" cy="229.1" r="11.7" fill="#0c1408"/><circle cx="322.2" cy="229.5" r="11.3" fill="#bfb355" stroke="#0c1408" stroke-width="0.9"/>
<circle cx="387.5" cy="219.4" r="11.7" fill="#0c1408"/><circle cx="386.8" cy="219.8" r="11.3" fill="#bfb355" stroke="#0c1408" stroke-width="0.9"/>
<circle cx="451.5" cy="209.8" r="11.7" fill="#0c1408"/><circle cx="450.8" cy="210.2" r="11.3" fill="#bfb355" stroke="#0c1408" stroke-width="0.9"/>
<circle cx="544.5" cy="196" r="11.7" fill="#0c1408"/><circle cx="543.8" cy="196.4" r="11.3" fill="#bfb355" stroke="#0c1408" stroke-width="0.9"/>
<circle cx="608.5" cy="185.9" r="11.7" fill="#0c1408"/><circle cx="607.8" cy="186.3" r="11.3" fill="#bfb355" stroke="#0c1408" stroke-width="0.9"/>
<circle cx="673.1" cy="181.5" r="11.7" fill="#0c1408"/><circle cx="672.4" cy="181.9" r="11.3" fill="#bfb355" stroke="#0c1408" stroke-width="0.9"/>
<circle cx="738.7" cy="189.2" r="11.7" fill="#0c1408"/><circle cx="738" cy="189.6" r="11.3" fill="#bfb355" stroke="#0c1408" stroke-width="0.9"/>
<circle cx="799.7" cy="210" r="11.7" fill="#0c1408"/><circle cx="799" cy="210.4" r="11.3" fill="#bfb355" stroke="#0c1408" stroke-width="0.9"/>
<circle cx="856.6" cy="242.8" r="11.7" fill="#0c1408"/><circle cx="855.9" cy="243.2" r="11.3" fill="#bfb355" stroke="#0c1408" stroke-width="0.9"/>
<circle cx="904.5" cy="286.3" r="11.7" fill="#0c1408"/><circle cx="903.8" cy="286.7" r="11.3" fill="#bfb355" stroke="#0c1408" stroke-width="0.9"/>
<circle cx="943.7" cy="338.2" r="11.7" fill="#0c1408"/><circle cx="943" cy="338.6" r="11.3" fill="#bfb355" stroke="#0c1408" stroke-width="0.9"/>
<circle cx="971.1" cy="396.6" r="11.7" fill="#0c1408"/><circle cx="970.4" cy="397" r="11.3" fill="#bfb355" stroke="#0c1408" stroke-width="0.9"/>
<circle cx="986.5" cy="461.6" r="11.7" fill="#0c1408"/><circle cx="985.8" cy="462" r="11.3" fill="#bfb355" stroke="#0c1408" stroke-width="0.9"/>
<circle cx="988.9" cy="526.9" r="11.7" fill="#0c1408"/><circle cx="988.2" cy="527.3" r="11.3" fill="#bfb355" stroke="#0c1408" stroke-width="0.9"/>
<circle cx="978.2" cy="591.1" r="11.7" fill="#0c1408"/><circle cx="977.5" cy="591.5" r="11.3" fill="#bfb355" stroke="#0c1408" stroke-width="0.9"/>
<circle cx="954.5" cy="651.2" r="11.7" fill="#0c1408"/><circle cx="953.8" cy="651.6" r="11.3" fill="#bfb355" stroke="#0c1408" stroke-width="0.9"/>
<circle cx="919.2" cy="705.7" r="11.7" fill="#0c1408"/><circle cx="918.5" cy="706.1" r="11.3" fill="#bfb355" stroke="#0c1408" stroke-width="0.9"/>
<circle cx="873.4" cy="752.6" r="11.7" fill="#0c1408"/><circle cx="872.7" cy="753" r="11.3" fill="#bfb355" stroke="#0c1408" stroke-width="0.9"/>
<circle cx="819.1" cy="789.5" r="11.7" fill="#0c1408"/><circle cx="818.4" cy="789.9" r="11.3" fill="#bfb355" stroke="#0c1408" stroke-width="0.9"/>
<circle cx="758.4" cy="814.9" r="11.7" fill="#0c1408"/><circle cx="757.7" cy="815.3" r="11.3" fill="#bfb355" stroke="#0c1408" stroke-width="0.9"/>
<circle cx="-17.5" cy="746.7" r="11.7" fill="#0c1408"/><circle cx="-18.2" cy="747.1" r="11.3" fill="#bfb355" stroke="#0c1408" stroke-width="0.9"/>
<circle cx="47.2" cy="754.5" r="11.7" fill="#0c1408"/><circle cx="46.5" cy="754.9" r="11.3" fill="#bfb355" stroke="#0c1408" stroke-width="0.9"/>
<circle cx="111.9" cy="762.3" r="11.7" fill="#0c1408"/><circle cx="111.2" cy="762.7" r="11.3" fill="#bfb355" stroke="#0c1408" stroke-width="0.9"/>
<circle cx="176.5" cy="770.1" r="11.7" fill="#0c1408"/><circle cx="175.8" cy="770.5" r="11.3" fill="#bfb355" stroke="#0c1408" stroke-width="0.9"/>
<circle cx="241.2" cy="777.9" r="11.7" fill="#0c1408"/><circle cx="240.5" cy="778.3" r="11.3" fill="#bfb355" stroke="#0c1408" stroke-width="0.9"/>
<circle cx="305.8" cy="785.7" r="11.7" fill="#0c1408"/><circle cx="305.1" cy="786.1" r="11.3" fill="#bfb355" stroke="#0c1408" stroke-width="0.9"/>
<circle cx="370.4" cy="793.5" r="11.7" fill="#0c1408"/><circle cx="369.8" cy="793.9" r="11.3" fill="#bfb355" stroke="#0c1408" stroke-width="0.9"/>
<circle cx="435.4" cy="801.6" r="11.7" fill="#0c1408"/><circle cx="434.7" cy="802" r="11.3" fill="#bfb355" stroke="#0c1408" stroke-width="0.9"/>
<circle cx="500.4" cy="809.6" r="11.7" fill="#0c1408"/><circle cx="499.7" cy="810" r="11.3" fill="#bfb355" stroke="#0c1408" stroke-width="0.9"/>
<circle cx="565.2" cy="817.6" r="11.7" fill="#0c1408"/><circle cx="564.5" cy="818" r="11.3" fill="#bfb355" stroke="#0c1408" stroke-width="0.9"/>
<path d="M-0.4 271.1l8.8 9.2M8.4 271.1l-8.8 9.2M62.9 262l8.8 9.2M71.7 262l-8.8 9.2M127.2 253l8.8 9.2M136 253l-8.8 9.2M191.2 243.3l8.8 9.2M200 243.3l-8.8 9.2M255.8 233.6l8.8 9.2M264.6 233.6l-8.8 9.2M320.8 223.9l8.8 9.2M329.6 223.9l-8.8 9.2M385.4 214.2l8.8 9.2M394.2 214.2l-8.8 9.2M606.4 180.7l8.8 9.2M615.2 180.7l-8.8 9.2M671 176.3l8.8 9.2M679.8 176.3l-8.8 9.2M736.6 184l8.8 9.2M745.4 184l-8.8 9.2M797.6 204.8l8.8 9.2M806.4 204.8l-8.8 9.2M854.5 237.6l8.8 9.2M863.3 237.6l-8.8 9.2M902.4 281.1l8.8 9.2M911.2 281.1l-8.8 9.2M941.6 333l8.8 9.2M950.4 333l-8.8 9.2M969 391.4l8.8 9.2M977.8 391.4l-8.8 9.2M984.4 456.4l8.8 9.2M993.2 456.4l-8.8 9.2M986.8 521.7l8.8 9.2M995.6 521.7l-8.8 9.2M976.1 585.9l8.8 9.2M984.9 585.9l-8.8 9.2M952.4 646l8.8 9.2M961.2 646l-8.8 9.2M917.1 700.5l8.8 9.2M925.9 700.5l-8.8 9.2M871.3 747.4l8.8 9.2M880.1 747.4l-8.8 9.2M817 784.3l8.8 9.2M825.8 784.3l-8.8 9.2M756.3 809.7l8.8 9.2M765.1 809.7l-8.8 9.2M-19.6 741.5l8.8 9.2M-10.8 741.5l-8.8 9.2M45.1 749.3l8.8 9.2M53.9 749.3l-8.8 9.2M109.8 757.1l8.8 9.2M118.6 757.1l-8.8 9.2M174.4 764.9l8.8 9.2M183.2 764.9l-8.8 9.2M239.1 772.7l8.8 9.2M247.9 772.7l-8.8 9.2M303.7 780.5l8.8 9.2M312.5 780.5l-8.8 9.2M368.4 788.3l8.8 9.2M377.1 788.3l-8.8 9.2M433.3 796.4l8.8 9.2M442.1 796.4l-8.8 9.2M498.3 804.4l8.8 9.2M507.1 804.4l-8.8 9.2M563.1 812.4l8.8 9.2M571.9 812.4l-8.8 9.2" stroke="#ba1459" stroke-width="2.4" fill="none"/><path d="M450.8 210.2L543.8 196.4" stroke="#0f4fa0" stroke-width="2.2"/>
<path d="M499.8 202.1L506.7 347.7H530" fill="none" stroke="#2a6cb2" stroke-width="1"/>
<rect x="450.1" y="205.8" width="7" height="7" fill="#8a8f86"/>
<path d="M448.3 204l10.6 10.6M458.9 204l-10.6 10.6" stroke="#1fcc1f" stroke-width="2.2"/>
<rect x="542.1" y="192.1" width="7" height="7" fill="#8a8f86"/>
<path d="M540.3 190.3l10.6 10.6M550.9 190.3l-10.6 10.6" stroke="#1fcc1f" stroke-width="2.2"/>
<circle cx="499.8" cy="202.1" r="3.8" fill="#b5b7bb"/>
<circle cx="530" cy="347.7" r="3" fill="#8d9096"/>
<rect x="254" y="805" width="17" height="1.2" fill="#050505"/>
<path d="M300.5 513L300.3 489.7" stroke="#30e830" stroke-width="1.3"/><path d="M298.8 514.7L276.4 514.2" stroke="#35f0f0" stroke-width="1.3"/>
<circle cx="300.3" cy="489.7" r="2.6" fill="#35e835"/><circle cx="276.4" cy="514.2" r="2.4" fill="#35f0f0"/><circle cx="298.8" cy="514.7" r="3" fill="#fb3c3c"/></svg>
<div id="note" class="cjk">首尾两节拉至直线端，<br>然后测量差多少，用测出的数据减节距</div>
<div id="tb"></div>
<div id="mp"><div class="t cjk">测量: 距离</div><div class="r"></div><div class="x">x</div></div>
<div id="pop"><div class="in"><div class="h cjk">所有参考</div><div class="mb"><i></i></div>
<div class="row cjk"><span style="left:3px;color:#4a4a4a">距离</span><span style="left:29px;width:1px;height:20px;background:#e4e4e4"></span><span style="left:34px;font-weight:bold;color:#6a6a6a;letter-spacing:0.2px">13.1804</span><span style="left:81px;width:1px;height:20px;background:#e4e4e4"></span><span style="left:86px;color:#7a7a7a;font-size:12.5px">mm</span></div></div></div>
<div id="wm" class="cjk"><span style="left:909.5px;color:#fa6a35">野</span><span style="left:951px;color:#fa6a35">火</span><span style="left:993.5px;color:#111">论</span><span style="left:1036px;color:#111">坛</span></div>
<div id="wm2">www.proewildfire.cn</div>
<svg width="1098" height="806" viewBox="0 0 1098 806" style="position:absolute;left:0;top:0;pointer-events:none"><defs><linearGradient id="gt" x1="0" y1="0" x2="1" y2="1"><stop offset="0" stop-color="#c4e8f3"/><stop offset="1" stop-color="#3f9cbd"/></linearGradient><radialGradient id="gs" cx=".38" cy=".32" r=".75"><stop offset="0" stop-color="#ffffff"/><stop offset=".5" stop-color="#d6d6d6"/><stop offset="1" stop-color="#777777"/></radialGradient><linearGradient id="gc" x1="0" y1="0" x2="1" y2="1"><stop offset="0" stop-color="#fdfdfd"/><stop offset="1" stop-color="#a9a9a9"/></linearGradient><linearGradient id="gg" x1="0" y1="0" x2="1" y2="0"><stop offset="0" stop-color="#b4b4b4"/><stop offset="1" stop-color="#dddddd"/></linearGradient><linearGradient id="gb" x1="0" y1="0" x2="0" y2="1"><stop offset="0" stop-color="#f4fbfe"/><stop offset="1" stop-color="#9ed8f0"/></linearGradient></defs>
<rect x="344.3" y="5.6" width="14.4" height="13.8" fill="#fcfcfc" stroke="#b3b3b3" stroke-width="1"/>
<path d="M354.6 15.6L358.6 19.8" stroke="#9b9b9b" stroke-width="2.4" stroke-linecap="round"/>
<circle cx="351.2" cy="12.2" r="4.6" fill="#e9f5fb" stroke="#3a93b7" stroke-width="1.2"/>
<path d="M380 14.8L384.8 19.8" stroke="#a3a3a3" stroke-width="2.6" stroke-linecap="round"/>
<circle cx="376.1" cy="10.8" r="5.6" fill="#f0f9fd" stroke="#2f8fb5" stroke-width="1.2"/>
<path d="M373.2 10.8h5.8M376.1 7.9v5.8" stroke="#0b5f8e" stroke-width="2"/>
<path d="M406 14.8L410.8 19.8" stroke="#a3a3a3" stroke-width="2.6" stroke-linecap="round"/>
<circle cx="402.1" cy="10.8" r="5.6" fill="#f0f9fd" stroke="#2f8fb5" stroke-width="1.2"/>
<path d="M399.2 10.8h5.8" stroke="#0b5f8e" stroke-width="2"/>
<rect x="422.6" y="5.8" width="15" height="14.8" fill="url(#gt)" stroke="#a9a9a9" stroke-width="0.9"/>
<path d="M423.1 10.2C427 8.2 433 8.8 435.2 12.4L426 19.9L423.1 19.9Z" fill="#ffffff"/>
<path d="M426.2 19.3L434.9 12.2" stroke="#0d5a86" stroke-width="1.4"/><circle cx="426.7" cy="19" r="1.1" fill="#0d5a86"/>
<path d="M455 6.600L460.400 4.800L464.400 5.800V13.200L459.600 15.600L455 13.600Z" fill="url(#gc)"/>
<path d="M459.600 8L464.400 5.800V13.200L459.600 15.600Z" fill="#9c9c9c" opacity=".75"/>
<circle cx="452.800" cy="15.600" r="5.300" fill="url(#gs)"/>
<path d="M466 19.600v3h-3z" fill="#555"/>
<path d="M474.8 9.6L478.8 5.4H490V16.4L485.8 20.6" fill="#d6eef7" stroke="#0f6a90" stroke-width="1.3" stroke-linejoin="round"/>
<path d="M485.8 9.6L490 5.4V16.4L485.8 20.6Z" fill="#7bbcd6" stroke="#0f6a90" stroke-width="1.1" stroke-linejoin="round"/>
<rect x="474.8" y="9.6" width="11" height="11" fill="#ffffff" stroke="#0f6a90" stroke-width="1.4"/>
<path d="M492.3 19.6v3h-3z" fill="#555"/>
<path d="M500.8 12.4L504.2 6L511.6 5.4L515.6 11V19.2L504.6 19.8Z" fill="#d9f1fa" stroke="#46a6cf" stroke-width="1"/>
<path d="M511.6 5.4L515.6 11V19.2L509.6 19.4V12.2Z" fill="#5ea6c9"/>
<path d="M500.8 12.4L509.6 12.2L504.6 19.8M509.6 12.2L511.6 5.4" fill="none" stroke="#46a6cf" stroke-width=".8"/>
<rect x="509.8" y="14.2" width="4.6" height="5.8" fill="#f4f4f4" stroke="#8a8a8a" stroke-width=".8"/><path d="M511 16h2.2M511 18h2.2" stroke="#666" stroke-width=".8"/>
<path d="M518.6 19.6v3h-3z" fill="#555"/>
<path d="M526.6 5.6h13v11.6h-13zM526.6 8.6h13M526.6 11.6h13M526.6 14.6h13M530 5.6v11.6" fill="#fafafa" stroke="#b0b0b0" stroke-width=".9"/>
<path d="M526.6 18.6h6" stroke="#9cc9e0" stroke-width="1"/>
<path d="M532 14.4h2.2l.8-1.3h3.2l.8 1.3h2.4v6h-9.400z" fill="#3d3d3d"/><circle cx="536.7" cy="17.4" r="2" fill="#8d8d8d" stroke="#222" stroke-width=".7"/>
<path d="M552.2 9.6L560 5.6L568 5.2L567.4 15L563 20.6L553.6 18Z" fill="#b9deed" stroke="#7fbdd7" stroke-width="1.1" stroke-linejoin="round"/>
<path d="M552.2 9.6L561.400 8.4L568 5.2M561.4 8.4L563 20.6" fill="none" stroke="#6aaecb" stroke-width="1"/>
<path d="M555.4 11.4L559.6 10.8L560.8 17L556.2 16.2Z" fill="#e4f3f9" stroke="#8cc4dc" stroke-width=".7"/>
<path d="M579.2 9.4L583 5.8H593L579.2 19.6Z" fill="url(#gb)" stroke="#9bd0e6" stroke-width=".7"/>
<path d="M593.6 6v10.200l-4 3.800h-9.6" fill="none" stroke="#9a9a9a" stroke-width="1" stroke-dasharray="1 1.2"/>
<path d="M590 9.500v9M591.600 8v9" stroke="#c4c4c4" stroke-width="1" stroke-dasharray="1 1"/>
<path d="M578.4 20.8L594.2 5.200" stroke="#14629a" stroke-width="1.5"/>
<path d="M596.3 19.6v3h-3z" fill="#555"/>
<path d="M604.3 5.6l3.6 3.6M607.9 5.6l-3.6 3.6" stroke="#8a6a12" stroke-width="1.3"/>
<path d="M613.9 4.8l-1.7 3.4M611.4 10.6l-1.7 3.4M608.8 17l-1.7 3.4" stroke="#8a6a12" stroke-width="1.5"/>
<path d="M614.6 12.2v4.4h4.4M614.6 16.6l-2.6 2.4" fill="none" stroke="#7a5c10" stroke-width="1.1"/>
<path d="M614.6 10.4l-1.5 2.3h3zM620.6 16.6l-2.3-1.5v3zM610.8 20.200l.5-2.600l2 2z" fill="#7a5c10"/>
<path d="M622.6 19.6v3h-3z" fill="#555"/>
<rect x="630.400" y="5.600" width="8.800" height="5.400" fill="#fdf3d6" stroke="#8d8d8d" stroke-width=".9"/>
<path d="M639.200 8.400h6.200M645 8.400l-3.400 4.400" fill="none" stroke="#4a4a4a" stroke-width="1.100"/><path d="M640.800 13.600l.6-3l2.400 1.900z" fill="#3a3a3a"/>
<path d="M637 18.400c2-2.800 7-2.800 9.200 0c-2.200 2.800-7.200 2.800-9.200 0z" fill="#3a3a3a"/><circle cx="641.600" cy="18.400" r="1.500" fill="#f2f2f2"/><circle cx="641.600" cy="18.400" r=".7" fill="#222"/>
<rect x="653.300" y="2.300" width="22.400" height="22" fill="#e1e2e4" stroke="#a9a9a9" stroke-width="1"/>
<path d="M659.600 8.600L663.800 13.300L659.600 18.600M663.800 13.300H669.400" fill="none" stroke="#2b2b2b" stroke-width="1"/>
<circle cx="659.600" cy="8.400" r="2.4" fill="#79b879" stroke="#5a9a5a" stroke-width=".5"/><circle cx="669.600" cy="13.300" r="2.4" fill="#e87474" stroke="#c05656" stroke-width=".5"/><circle cx="659.600" cy="18.600" r="2.4" fill="#3a8fc0" stroke="#2a7098" stroke-width=".5"/>
<path d="M690 6.400L683.400 18H696.400Z" fill="none" stroke="#b3b3b3" stroke-width="2.600" stroke-linejoin="round"/>
<path d="M692.800 15.400L697.400 18L692.800 20.600Z" fill="#f6f6f6" stroke="#b3b3b3" stroke-width=".9"/>
<rect x="710" y="7" width="4" height="10.800" fill="#a9a9a9"/><rect x="717" y="7" width="4" height="10.800" fill="#a9a9a9"/>
<path d="M734.200 7.200H749.800V17.800H736.200C740.600 16.600 740.600 9.400 734.200 7.200Z" fill="url(#gg)"/><rect x="681.600" y="85.300" width="27" height="27.400" fill="#dfe0e2" stroke="#b9babc" stroke-width="1"/>
<g transform="rotate(-38 639.300 99.300)"><rect x="629.300" y="95.300" width="20" height="8" fill="#fdfdfd" stroke="#a5a5a5" stroke-width="1"/><path d="M632.300 103v-2.600M635.100 103v-2.600M637.900 103v-3.600M640.700 103v-2.600M643.500 103v-2.600M646.300 103v-3.600" stroke="#2a8fd0" stroke-width=".9"/></g>
<path d="M657.900 90.800v11.400M676.500 90.800v11.400" stroke="#555" stroke-width="1.100"/>
<path d="M659.400 94.400c3.400-4 5.600-1.600 7.800 1.400s4.400 4.200 7.800 1" fill="none" stroke="#222" stroke-width="1.100"/>
<path d="M658.900 95.400l.4-3l2.200 1.900zM675.600 96.300l-.6 3l-2.100-2z" fill="#222"/>
<path d="M657.600 104.800c3.400-3.400 6.400-2.400 9.600 0s6.200 3 9.600-.8" fill="none" stroke="#2a9bd6" stroke-width="2"/>
<path d="M685.600 89.400v12.200M696.400 89.400v12.200" stroke="#444" stroke-width="1.100"/>
<path d="M687 92.500h8" stroke="#222" stroke-width="1"/><path d="M686.400 92.500l2.600-1.700v3.400zM695.600 92.500l-2.600-1.700v3.400z" fill="#222"/>
<circle cx="687.1" cy="105.3" r="1.700" fill="#bfe3f6" stroke="#2a96d2" stroke-width="1.100"/>
<circle cx="698.1" cy="101.9" r="1.700" fill="#bfe3f6" stroke="#2a96d2" stroke-width="1.100"/>
<circle cx="703.0" cy="107.0" r="1.700" fill="#bfe3f6" stroke="#2a96d2" stroke-width="1.100"/>
<path d="M713.400 108.200H732.600M713.400 108.200L728.200 93.400" fill="none" stroke="#858585" stroke-width="1.300"/>
<path d="M727.200 97.200c3.400 2.600 4.400 5.600 4 9.400" fill="none" stroke="#222" stroke-width="1.100"/><path d="M725.800 96l3.400.3l-1.800 2.600zM731.200 108l-2-2.600l3.300-.3z" fill="#222"/>
<circle cx="751.100" cy="99.100" r="8.700" fill="#fbfbfb" stroke="#8f8f8f" stroke-width="1.100"/>
<path d="M746.400 103.800L755.800 94.400" stroke="#222" stroke-width="1.100"/><path d="M745.200 105l.8-3.400l2.600 2.600zM757 93.200l-.8 3.400l-2.600-2.600z" fill="#222"/>
<rect x="770.400" y="90.600" width="17" height="17" fill="#f9f9f9" stroke="#8f8f8f" stroke-width="1.100"/>
<path d="M773 93.200L785 105.200M785 93.200L773 105.200" stroke="#222" stroke-width="1.100"/>
<path d="M771.800 92l3.400.6l-2.800 2.800zM786.200 92l-.6 3.400l-2.800-2.800zM771.800 106.200l.6-3.400l2.800 2.800zM786.200 106.200l-3.400-.6l2.800-2.800z" fill="#222"/>
<path d="M798.600 95.400L803.400 90.200H816.200V103.400L811.400 108.800H798.600Z" fill="#f2fafd" stroke="#3aa0d2" stroke-width="1.100" stroke-linejoin="round"/>
<path d="M798.600 101.600H811.400L816.200 97.400V103.400L811.400 108.800H798.600Z" fill="url(#gb)"/>
<path d="M798.600 95.400H811.400V108.800M811.400 95.400L816.200 90.200M803.400 90.200V97.400H816.200M803.400 97.400L798.600 101.600" fill="none" stroke="#3aa0d2" stroke-width=".9"/>
<g font-family="Liberation Sans,sans-serif" fill="#4a4a4a"><text x="826.6" y="92.5" font-size="8">y</text><text x="832.1" y="97" font-size="8.5">x</text><text x="825" y="99.8" font-size="8.5">z</text><g font-weight="bold" fill="#3a3a3a"><text x="838.8" y="102.8" font-size="9">x</text><text x="833.7" y="106.4" font-size="9">y</text><text x="840.6" y="108.9" font-size="9">z</text></g></g>
<path d="M827.2 102.2C827.2 104.7 828.2 105.3 830.2 105.3" fill="none" stroke="#2a2a2a" stroke-width="1.3"/><path d="M832.2 105.3l-2.800-2.400v4.800z" fill="#2a2a2a"/>
<path d="M849.500 85v28" stroke="#bfc1c4" stroke-width="1"/>
<g transform="rotate(-33 890.400 100)"><rect x="884" y="96.800" width="12.800" height="6.600" rx="1.600" fill="#fcfcfc" stroke="#8a8a8a" stroke-width="1"/></g><path d="M887.400 105.800H897.800" stroke="#9a9a9a" stroke-width="1"/>
<path d="M908.200 89.400H925.800V107.800H908.200Z" fill="#5d5e63"/>
<rect x="910.800" y="89.400" width="11.600" height="9.400" fill="#f2f2f2"/><rect x="911.600" y="101.600" width="10.400" height="6.200" fill="#8fc7e6"/><rect x="913" y="102.400" width="3" height="5.400" fill="#f4f4f4"/>
<path d="M926.800 96.600h6.800l-3.400 3.600z" fill="#4a4a4a"/>
<rect x="949.200" y="93.400" width="12.800" height="10.600" rx="2.600" fill="#5b5c64"/><path d="M952.400 98.700h6.400M955.600 95.500v6.400" stroke="#fff" stroke-width="1.500"/><path d="M982 721.6C990.5 727.5 995.2 735 994.6 743.5C994 752 989.5 759 982.4 763.6L980.4 761.8C984.4 756 986.2 749.5 985.8 743C985.4 735.5 984.2 728.5 982 721.6Z" fill="#fa6a35"/><path d="M977.4 730C982.6 733.6 985.8 738.6 986 744.4C986.2 750.4 984 755.4 980.4 760L979.2 758.2C981.2 753 981.8 748 981.2 743C980.6 738.4 979.4 734.2 977.4 730Z" fill="#fa6a35"/></svg>
</body></html>
